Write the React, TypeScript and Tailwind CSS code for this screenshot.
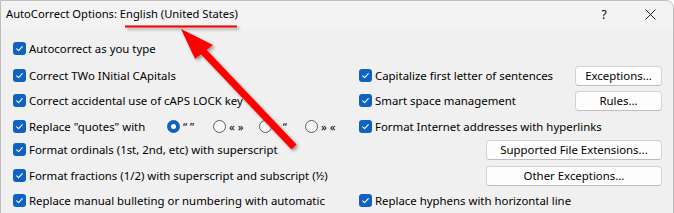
import React from "react";

const Check = () => (
  <span className="w-[13px] h-[13px] rounded-[3px] bg-[#0f62c1] flex items-center justify-center shrink-0">
    <svg width="13" height="13" viewBox="0 0 13 13">
      <path d="M3.7 6.8L5.6 8.6L9.3 4.7" fill="none" stroke="white" strokeWidth="1.1" strokeLinecap="round" strokeLinejoin="round" />
    </svg>
  </span>
);

const CB = ({ label }: { label: string }) => (
  <div className="flex items-center gap-[3px] whitespace-nowrap">
    <Check />
    <span>{label}</span>
  </div>
);

const Radio = ({ on, label }: { on?: boolean; label: string }) => (
  <div className="w-[46px] flex items-center gap-[3px] whitespace-nowrap">
    {on ? (
      <span className="w-[13px] h-[13px] rounded-full bg-[#0f62c1] flex items-center justify-center shrink-0">
        <span className="w-[5px] h-[5px] rounded-full bg-white" />
      </span>
    ) : (
      <span className="w-[13px] h-[13px] rounded-full border border-[#5d5d5d] bg-[#f7f7f7] shrink-0" />
    )}
    <span>{label}</span>
  </div>
);

const Btn = ({ label, w }: { label: string; w: string }) => (
  <div
    className={`${w} h-[20px] ml-auto rounded-[4px] border border-[#d2d2d2] border-b-[#bcbcbc] bg-[#fdfdfd] flex items-center justify-center whitespace-nowrap`}
  >
    {label}
  </div>
);

export default function App() {
  return (
    <div
      className="relative w-[674px] h-[213px] overflow-hidden bg-white text-[11.4px] text-black"
      style={{ fontFamily: '"Noto Sans", "Open Sans", sans-serif' }}
    >
      <div className="w-[674px] h-[230px] border border-[#bdbdbd] rounded-tr-[8px] bg-[#f0f0f0] flex flex-col">
        <div className="h-[27px] flex items-center bg-[#f3f3f3] rounded-tr-[8px]">
          <span className="pl-[5px] whitespace-nowrap text-[11.2px]">AutoCorrect Options: English (United States)</span>
          <div className="ml-auto w-[46px] h-full flex items-center justify-center text-[12px]">?</div>
          <div className="w-[46px] h-full flex items-center justify-center">
            <svg width="11" height="11" viewBox="0 0 11 11">
              <path d="M0.5 0.5L10.5 10.5M10.5 0.5L0.5 10.5" stroke="#1a1a1a" strokeWidth="1" />
            </svg>
          </div>
        </div>
        <div className="flex flex-col pl-[12px] pr-[11px]">
          <div className="h-[13px] mt-[14px] flex items-center">
            <CB label="Autocorrect as you type" />
          </div>
          <div className="h-[13px] mt-[14px] flex items-center">
            <div className="w-[346px]">
              <CB label="Correct TWo INitial CApitals" />
            </div>
            <CB label="Capitalize first letter of sentences" />
            <Btn label="Exceptions..." w="w-[87px]" />
          </div>
          <div className="h-[13px] mt-[12px] flex items-center">
            <div className="w-[346px]">
              <CB label="Correct accidental use of cAPS LOCK key" />
            </div>
            <CB label="Smart space management" />
            <Btn label="Rules..." w="w-[87px]" />
          </div>
          <div className="h-[13px] mt-[13px] flex items-center">
            <div className="w-[346px] flex items-center">
              <div className="w-[154px]">
                <CB label={'Replace "quotes" with'} />
              </div>
              <Radio on label="“ ”" />
              <Radio label="« »" />
              <Radio label="„ “" />
              <Radio label="» «" />
            </div>
            <CB label="Format Internet addresses with hyperlinks" />
          </div>
          <div className="h-[13px] mt-[10px] flex items-center">
            <CB label="Format ordinals (1st, 2nd, etc) with superscript" />
            <Btn label="Supported File Extensions..." w="w-[176px]" />
          </div>
          <div className="h-[13px] mt-[13px] flex items-center">
            <CB label="Format fractions (1/2) with superscript and subscript (½)" />
            <Btn label="Other Exceptions..." w="w-[176px]" />
          </div>
          <div className="h-[13px] mt-[12px] flex items-center">
            <div className="w-[346px]">
              <CB label="Replace manual bulleting or numbering with automatic" />
            </div>
            <CB label="Replace hyphens with horizontal line" />
          </div>
        </div>
      </div>
      <svg className="absolute inset-0 pointer-events-none" width="674" height="213" viewBox="0 0 674 213">
        <defs>
          <filter id="sh" x="-20%" y="-20%" width="140%" height="140%">
            <feDropShadow dx="2" dy="2" stdDeviation="1.5" floodColor="#000" floodOpacity="0.35" />
          </filter>
        </defs>
        <g filter="url(#sh)">
          <rect x="125" y="25.5" width="112" height="2" fill="#f00000" />
          <line x1="294" y1="147" x2="198" y2="46" stroke="#ff0000" strokeWidth="7" />
          <polygon points="181,29 195,59 213,45" fill="#ff0000" />
        </g>
      </svg>
    </div>
  );
}
